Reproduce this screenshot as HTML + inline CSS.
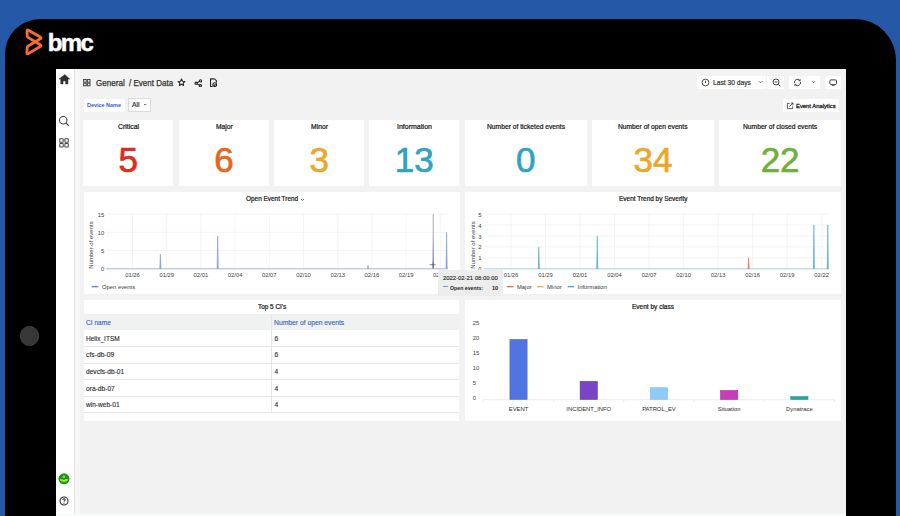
<!DOCTYPE html>
<html><head><meta charset="utf-8">
<style>
*{margin:0;padding:0;box-sizing:border-box}
html,body{width:900px;height:516px;overflow:hidden;background:#2558a6;font-family:"Liberation Sans",sans-serif}
.a{position:absolute;white-space:nowrap}
#frame{position:absolute;left:5.3px;top:19px;width:891.2px;height:560px;background:#000;border-radius:35px 41px 0 0}
#cam{position:absolute;left:19.6px;top:326.1px;width:19.6px;height:19.6px;border-radius:50%;background:#363636;border:0.6px solid #444}
#screen{position:absolute;left:55.5px;top:68.5px;width:790.5px;height:448px;background:#f1f2f1;overflow:hidden}
#side{position:absolute;left:55.5px;top:68.5px;width:19.2px;height:448px;background:#fff;border-right:1px solid #e4e4e4}
.p{position:absolute;background:#fff}
.st{font-size:6.3px;font-weight:bold;color:#222;text-align:center}
.sv{font-size:35px;text-align:center;line-height:1;-webkit-text-stroke:0.7px currentColor}
.ax{font-size:5.6px;color:#555}
.btn{position:absolute;background:#fff}
</style></head><body>
<div id="frame"></div>
<div id="cam"></div>
<svg class="a" style="left:0;top:0" width="100" height="70">
  <path d="M28.46 30.20 L40.24 37.00 Q41.80 37.90 40.25 38.82 L28.23 45.99 Q27.20 46.60 27.14 47.80 L26.89 52.70 Q26.80 54.50 28.35 53.58 L40.25 46.52 Q41.80 45.60 40.25 44.68 L28.33 37.61 Q27.30 37.00 27.24 35.80 L26.99 31.10 Q26.90 29.30 28.46 30.20Z" fill="none" stroke="#f96a36" stroke-width="2.8" stroke-linecap="round" stroke-linejoin="round"/>
</svg>
<div class="a" style="left:47.8px;top:30.5px;font-size:24px;line-height:24px;font-weight:bold;color:#fff;letter-spacing:-1.7px;-webkit-text-stroke:0.5px #fff">bmc</div>
<div id="screen"></div>
<div id="side"></div>
<div class="a" style="left:75.3px;top:68.5px;width:4.5px;height:446px;background:#f5f6f6"></div>
<div class="a" style="left:55.5px;top:513.8px;width:790.5px;height:3px;background:#f9fafa"></div>

<div class="p" style="left:83.30px;top:119.70px;width:90.00px;height:66.60px;"></div>
<div class="a" style="left:117.90px;top:123.10px;font-size:6.6px;line-height:7.92px;font-weight:normal;color:#1a1a1a;transform:scaleX(1.0465);transform-origin:0 0;-webkit-text-stroke:0.22px #1a1a1a">Critical</div>
<div class="a sv" style="left:83.3px;width:90.00000000000001px;top:142px;color:#e02a1c">5</div>
<div class="p" style="left:179.00px;top:119.70px;width:90.00px;height:66.60px;"></div>
<div class="a" style="left:215.50px;top:123.10px;font-size:6.6px;line-height:7.92px;font-weight:normal;color:#1a1a1a;transform:scaleX(1.0182);transform-origin:0 0;-webkit-text-stroke:0.22px #1a1a1a">Major</div>
<div class="a sv" style="left:179px;width:90px;top:142px;color:#e8651a">6</div>
<div class="p" style="left:274.30px;top:119.70px;width:90.00px;height:66.60px;"></div>
<div class="a" style="left:311.00px;top:123.10px;font-size:6.6px;line-height:7.92px;font-weight:normal;color:#1a1a1a;transform:scaleX(1.0242);transform-origin:0 0;-webkit-text-stroke:0.22px #1a1a1a">Minor</div>
<div class="a sv" style="left:274.3px;width:90.0px;top:142px;color:#eaa72a">3</div>
<div class="p" style="left:369.30px;top:119.70px;width:90.00px;height:66.60px;"></div>
<div class="a" style="left:397.00px;top:123.10px;font-size:6.6px;line-height:7.92px;font-weight:normal;color:#1a1a1a;transform:scaleX(1.0595);transform-origin:0 0;-webkit-text-stroke:0.22px #1a1a1a">Information</div>
<div class="a sv" style="left:369.3px;width:90.0px;top:142px;color:#2fa3bf">13</div>
<div class="p" style="left:465.00px;top:119.70px;width:121.70px;height:66.60px;"></div>
<div class="a" style="left:486.90px;top:123.10px;font-size:6.6px;line-height:7.92px;font-weight:normal;color:#1a1a1a;transform:scaleX(1.0188);transform-origin:0 0;-webkit-text-stroke:0.22px #1a1a1a">Number of ticketed events</div>
<div class="a sv" style="left:465px;width:121.70000000000005px;top:142px;color:#2fa3bf">0</div>
<div class="p" style="left:592.00px;top:119.70px;width:122.00px;height:66.60px;"></div>
<div class="a" style="left:618.20px;top:123.10px;font-size:6.6px;line-height:7.92px;font-weight:normal;color:#1a1a1a;transform:scaleX(1.0145);transform-origin:0 0;-webkit-text-stroke:0.22px #1a1a1a">Number of open events</div>
<div class="a sv" style="left:592px;width:122px;top:142px;color:#eaa72a">34</div>
<div class="p" style="left:719.00px;top:119.70px;width:122.20px;height:66.60px;"></div>
<div class="a" style="left:743.00px;top:123.10px;font-size:6.6px;line-height:7.92px;font-weight:normal;color:#1a1a1a;transform:scaleX(1.0165);transform-origin:0 0;-webkit-text-stroke:0.22px #1a1a1a">Number of closed events</div>
<div class="a sv" style="left:719px;width:122.20000000000005px;top:142px;color:#6fb03a">22</div>
<div class="p" style="left:83.80px;top:191.60px;width:376.20px;height:102.20px;"></div>
<div class="p" style="left:464.60px;top:191.60px;width:376.60px;height:102.20px;"></div>
<div class="p" style="left:83.80px;top:299.50px;width:375.60px;height:121.00px;"></div>
<div class="p" style="left:464.60px;top:299.50px;width:376.90px;height:121.00px;"></div>
<svg class="a" style="left:82px;top:78px" width="10" height="9" viewBox="0 0 10 9"><g fill="none" stroke="#444" stroke-width="1"><rect x="1.6" y="1.5" width="2.6" height="2.6"/><rect x="5.4" y="1.5" width="2.6" height="2.6"/><rect x="1.6" y="5.2" width="2.6" height="2.6"/><rect x="5.4" y="5.2" width="2.6" height="2.6"/></g></svg>
<div class="a" style="left:95.50px;top:77.54px;font-size:9.2px;line-height:11.04px;font-weight:normal;color:#2e2e2e;transform:scaleX(0.8793);transform-origin:0 0;-webkit-text-stroke:0.25px #2e2e2e">General</div>
<div class="a" style="left:128.50px;top:77.54px;font-size:9.2px;line-height:11.04px;font-weight:normal;color:#2e2e2e;transform:scaleX(0.8747);transform-origin:0 0;-webkit-text-stroke:0.25px #2e2e2e">/ Event Data</div>
<svg class="a" style="left:177.1px;top:78.3px" width="9" height="9" viewBox="0 0 24 24"><path d="M12 2.8l2.7 5.8 6.3.7-4.7 4.3 1.3 6.2-5.6-3.2-5.6 3.2 1.3-6.2-4.7-4.3 6.3-.7z" fill="none" stroke="#2a2a2a" stroke-width="3" stroke-linejoin="round"/></svg>
<svg class="a" style="left:193.6px;top:78.5px" width="8.6" height="8.6" viewBox="0 0 24 24"><g fill="none" stroke="#2a2a2a" stroke-width="3.2"><circle cx="18" cy="5.2" r="3.1"/><circle cx="5.8" cy="12" r="3.1"/><circle cx="18" cy="18.8" r="3.1"/><path d="M8.6 10.4l6.6-3.6M8.6 13.6l6.6 3.6"/></g></svg>
<svg class="a" style="left:208.5px;top:77.9px" width="8.8" height="9.6" viewBox="0 0 20 22"><g fill="none" stroke="#2a2a2a" stroke-width="2.6" stroke-linejoin="round"><path d="M12.5 2H3.5v17.5H8.5"/><path d="M12.5 2l4.5 4.5v4"/><circle cx="13" cy="15.2" r="4.3"/><path d="M11 15.2l1.6 1.6 2.4-2.4"/></g></svg>
<div class="btn" style="left:697.00px;top:75.80px;width:69.40px;height:13.00px;"></div>
<div class="btn" style="left:767.30px;top:75.80px;width:16.40px;height:13.00px;"></div>
<div class="btn" style="left:789.00px;top:75.80px;width:16.60px;height:13.00px;"></div>
<div class="btn" style="left:806.00px;top:75.80px;width:14.10px;height:13.00px;"></div>
<div class="btn" style="left:825.40px;top:75.80px;width:15.80px;height:13.00px;"></div>
<svg class="a" style="left:700.5px;top:77.9px" width="9" height="9" viewBox="0 0 9 9"><circle cx="4.5" cy="4.5" r="3.4" fill="none" stroke="#444" stroke-width="0.95"/><path d="M4.5 2.6V4.6" stroke="#444" stroke-width="0.9"/><circle cx="4.5" cy="4.6" r="0.7" fill="#444"/></svg>
<div class="a" style="left:712.90px;top:78.90px;font-size:6.6px;line-height:7.92px;font-weight:normal;color:#333;transform:scaleX(1.0128);transform-origin:0 0;-webkit-text-stroke:0.2px #333">Last 30 days</div>
<svg class="a" style="left:757.5px;top:80px" width="5" height="4" viewBox="0 0 10 8"><path d="M2 2.5l3 3 3-3" fill="none" stroke="#555" stroke-width="1.6"/></svg>
<svg class="a" style="left:771.5px;top:78.4px" width="9" height="9" viewBox="0 0 9 9"><g fill="none" stroke="#383838" stroke-width="0.95"><circle cx="4" cy="4" r="3"/><path d="M6.2 6.2l2.2 2.2M2.6 4h2.8"/></g></svg>
<svg class="a" style="left:792.5px;top:77.9px" width="9" height="9" viewBox="0 0 9 9"><g fill="none" stroke="#383838" stroke-width="0.95"><path d="M1.6 5A3 3 0 0 1 6.8 2.3"/><path d="M7.4 4A3 3 0 0 1 2.2 6.7"/></g><path d="M7.6 0.9L7.5 3.3L5.2 2.9Z" fill="#383838"/><path d="M1.4 8.1L1.5 5.7L3.8 6.1Z" fill="#383838"/></svg>
<svg class="a" style="left:810.6px;top:80.4px" width="5" height="4" viewBox="0 0 10 8"><path d="M2 2.5l3 3 3-3" fill="none" stroke="#555" stroke-width="1.7"/></svg>
<svg class="a" style="left:829px;top:78.6px" width="8.4" height="8" viewBox="0 0 8.4 8"><rect x="0.9" y="0.9" width="6.6" height="4.6" rx="1" fill="none" stroke="#383838" stroke-width="0.95"/><path d="M2.4 5.6h3.6l-0.6 1.5h-2.4z" fill="#666"/></svg>
<div class="btn" style="left:84.00px;top:98.60px;width:40.80px;height:13.20px;"></div>
<div class="a" style="left:87.20px;top:101.96px;font-size:5.8px;line-height:6.96px;font-weight:bold;color:#3a60c2;transform:scaleX(0.9417);transform-origin:0 0;">Device Name</div>
<div class="btn" style="left:127.60px;top:98.20px;width:23.60px;height:14.00px;;border:0.8px solid #dcdcdc"></div>
<div class="a" style="left:132.00px;top:101.42px;font-size:7px;line-height:8.4px;font-weight:normal;color:#333;transform:scaleX(0.9781);transform-origin:0 0;-webkit-text-stroke:0.2px #333">All</div>
<svg class="a" style="left:142.6px;top:103.3px" width="4.4" height="3.6" viewBox="0 0 10 8"><path d="M2 2l3 3 3-3" fill="none" stroke="#444" stroke-width="1.8"/></svg>
<div class="btn" style="left:783.00px;top:99.00px;width:55.80px;height:13.00px;"></div>
<svg class="a" style="left:785.8px;top:101.6px" width="8" height="8" viewBox="0 0 20 20"><g fill="none" stroke="#333" stroke-width="2"><path d="M9 3.5H3.5v13h13V11"/><path d="M11.5 2.5h6v6M17.5 2.5L9 11"/></g></svg>
<div class="a" style="left:795.80px;top:101.58px;font-size:6.2px;line-height:7.44px;font-weight:normal;color:#1e1e1e;transform:scaleX(0.9444);transform-origin:0 0;-webkit-text-stroke:0.3px #1e1e1e">Event Analytics</div>
<svg class="a" style="left:57.5px;top:72.5px" width="13" height="12" viewBox="0 0 24 22"><path d="M12.7 2.6L1.8 11.2h3.2v9h4.4v-5.6h4.6v5.6h4.4v-9h3.2z" fill="#303030" stroke="#303030" stroke-width="0.8" stroke-linejoin="round"/></svg>
<svg class="a" style="left:57.5px;top:114.5px" width="12" height="12" viewBox="0 0 24 24"><g fill="none" stroke="#444" stroke-width="2.2"><circle cx="10.5" cy="10.5" r="7.5"/><path d="M16 16l5.5 5.5"/></g></svg>
<svg class="a" style="left:59px;top:138.2px" width="10.4" height="10" viewBox="0 0 10.4 10"><g fill="none" stroke="#4a4a4a" stroke-width="1.05"><rect x="0.8" y="0.8" width="3.4" height="3.4" rx="0.4"/><rect x="5.9" y="0.8" width="3.4" height="3.4" rx="0.4"/><rect x="0.8" y="5.6" width="3.4" height="3.4" rx="0.4"/><rect x="5.9" y="5.6" width="3.4" height="3.4" rx="0.4"/></g></svg>
<svg class="a" style="left:57.9px;top:472.9px" width="12" height="12" viewBox="0 0 24 24"><circle cx="12" cy="11.6" r="11" fill="#1c961c"/><circle cx="11.6" cy="7.4" r="2.6" fill="#7fe04a"/><path d="M3.2 13.4Q6 10.8 9 12.6Q11.6 15 14.4 12.6Q17.4 10.8 20.4 13.4Q18.5 17.6 12 17.8Q5.5 17.6 3.2 13.4Z" fill="#a9ea34"/></svg>
<svg class="a" style="left:58.8px;top:495.9px" width="10" height="10" viewBox="0 0 20 20"><g fill="none" stroke="#2a2a2a" stroke-width="2.1"><circle cx="10" cy="10" r="8"/><path d="M7.8 7.8a2.2 2.2 0 1 1 3 2c-.6.3-.8.7-.8 1.4"/></g><circle cx="10" cy="14.3" r="1.2" fill="#2a2a2a"/></svg>
<div class="a" style="left:245.60px;top:195.30px;font-size:6.6px;line-height:7.92px;font-weight:normal;color:#1a1a1a;transform:scaleX(0.9746);transform-origin:0 0;-webkit-text-stroke:0.22px #1a1a1a">Open Event Trend</div>
<svg class="a" style="left:299.5px;top:197.5px" width="5" height="4" viewBox="0 0 10 8"><path d="M2 2l3 3 3-3" fill="none" stroke="#444" stroke-width="1.5"/></svg>
<svg class="a" style="left:83px;top:191px" width="378" height="104" viewBox="83 191 378 104"><line x1="106.2" x2="447.7" y1="268.80" y2="268.80" stroke="#ececec" stroke-width="0.6"/><text x="104.20" y="271.40" font-size="5.85" fill="#3c3c3c" text-anchor="end" font-weight="normal" font-family="Liberation Sans, sans-serif" >0</text><line x1="106.2" x2="447.7" y1="250.53" y2="250.53" stroke="#ececec" stroke-width="0.6"/><text x="104.20" y="253.13" font-size="5.85" fill="#3c3c3c" text-anchor="end" font-weight="normal" font-family="Liberation Sans, sans-serif" >5</text><line x1="106.2" x2="447.7" y1="232.27" y2="232.27" stroke="#ececec" stroke-width="0.6"/><text x="104.20" y="234.87" font-size="5.85" fill="#3c3c3c" text-anchor="end" font-weight="normal" font-family="Liberation Sans, sans-serif" >10</text><line x1="106.2" x2="447.7" y1="214.00" y2="214.00" stroke="#ececec" stroke-width="0.6"/><text x="104.20" y="216.60" font-size="5.85" fill="#3c3c3c" text-anchor="end" font-weight="normal" font-family="Liberation Sans, sans-serif" >15</text><line x1="132.50" x2="132.50" y1="214.0" y2="268.8" stroke="#ececec" stroke-width="0.6"/><text x="132.50" y="277.30" font-size="5.85" fill="#3c3c3c" text-anchor="middle" font-weight="normal" font-family="Liberation Sans, sans-serif" >01/26</text><line x1="166.70" x2="166.70" y1="214.0" y2="268.8" stroke="#ececec" stroke-width="0.6"/><text x="166.70" y="277.30" font-size="5.85" fill="#3c3c3c" text-anchor="middle" font-weight="normal" font-family="Liberation Sans, sans-serif" >01/29</text><line x1="200.90" x2="200.90" y1="214.0" y2="268.8" stroke="#ececec" stroke-width="0.6"/><text x="200.90" y="277.30" font-size="5.85" fill="#3c3c3c" text-anchor="middle" font-weight="normal" font-family="Liberation Sans, sans-serif" >02/01</text><line x1="235.10" x2="235.10" y1="214.0" y2="268.8" stroke="#ececec" stroke-width="0.6"/><text x="235.10" y="277.30" font-size="5.85" fill="#3c3c3c" text-anchor="middle" font-weight="normal" font-family="Liberation Sans, sans-serif" >02/04</text><line x1="269.30" x2="269.30" y1="214.0" y2="268.8" stroke="#ececec" stroke-width="0.6"/><text x="269.30" y="277.30" font-size="5.85" fill="#3c3c3c" text-anchor="middle" font-weight="normal" font-family="Liberation Sans, sans-serif" >02/07</text><line x1="303.50" x2="303.50" y1="214.0" y2="268.8" stroke="#ececec" stroke-width="0.6"/><text x="303.50" y="277.30" font-size="5.85" fill="#3c3c3c" text-anchor="middle" font-weight="normal" font-family="Liberation Sans, sans-serif" >02/10</text><line x1="337.70" x2="337.70" y1="214.0" y2="268.8" stroke="#ececec" stroke-width="0.6"/><text x="337.70" y="277.30" font-size="5.85" fill="#3c3c3c" text-anchor="middle" font-weight="normal" font-family="Liberation Sans, sans-serif" >02/13</text><line x1="371.90" x2="371.90" y1="214.0" y2="268.8" stroke="#ececec" stroke-width="0.6"/><text x="371.90" y="277.30" font-size="5.85" fill="#3c3c3c" text-anchor="middle" font-weight="normal" font-family="Liberation Sans, sans-serif" >02/16</text><line x1="406.10" x2="406.10" y1="214.0" y2="268.8" stroke="#ececec" stroke-width="0.6"/><text x="406.10" y="277.30" font-size="5.85" fill="#3c3c3c" text-anchor="middle" font-weight="normal" font-family="Liberation Sans, sans-serif" >02/19</text><line x1="440.30" x2="440.30" y1="214.0" y2="268.8" stroke="#ececec" stroke-width="0.6"/><text x="440.30" y="277.30" font-size="5.85" fill="#3c3c3c" text-anchor="middle" font-weight="normal" font-family="Liberation Sans, sans-serif" >02/22</text><line x1="106.2" x2="447.7" y1="268.8" y2="268.8" stroke="#a9b8e4" stroke-width="1"/><path d="M159.80 268.8 L160.40 254.19 L161.00 268.8" fill="#8ea6d8" stroke="#7f9ad6" stroke-width="0.6"/><path d="M217.10 268.8 L217.70 235.92 L218.30 268.8" fill="#8ea6d8" stroke="#7f9ad6" stroke-width="0.6"/><path d="M367.40 268.8 L368.00 265.15 L368.60 268.8" fill="#8ea6d8" stroke="#7f9ad6" stroke-width="0.6"/><path d="M446.00 268.8 L446.60 232.27 L447.20 268.8" fill="#8ea6d8" stroke="#7f9ad6" stroke-width="0.6"/><line x1="433.2" x2="433.2" y1="214.0" y2="268.8" stroke="#b8a4b4" stroke-width="1"/><path d="M432.4 268.8 L433.2 232.5 L434 268.8" fill="#8e94c8"/><path d="M429.6 264.7h6M433.2 261.8v5.8" stroke="#555" stroke-width="0.7"/><text x="91.20" y="245.00" font-size="6" fill="#3c3c3c" text-anchor="middle" font-weight="normal" font-family="Liberation Sans, sans-serif" transform="rotate(-90 91.2 245)" dy="2">Number of events</text><line x1="91.7" x2="98.4" y1="286.7" y2="286.7" stroke="#5577cc" stroke-width="1.2"/><text x="102.00" y="288.70" font-size="5.85" fill="#383838" text-anchor="start" font-weight="normal" font-family="Liberation Sans, sans-serif" >Open events</text></svg>
<div class="a" style="left:618.90px;top:195.30px;font-size:6.6px;line-height:7.92px;font-weight:normal;color:#1a1a1a;transform:scaleX(0.9792);transform-origin:0 0;-webkit-text-stroke:0.22px #1a1a1a">Event Trend by Severity</div>
<svg class="a" style="left:464px;top:191px" width="378" height="104" viewBox="464 191 378 104"><line x1="483.5" x2="829" y1="268.80" y2="268.80" stroke="#ececec" stroke-width="0.6"/><text x="481.50" y="271.40" font-size="5.85" fill="#3c3c3c" text-anchor="end" font-weight="normal" font-family="Liberation Sans, sans-serif" >0</text><line x1="483.5" x2="829" y1="257.84" y2="257.84" stroke="#ececec" stroke-width="0.6"/><text x="481.50" y="260.44" font-size="5.85" fill="#3c3c3c" text-anchor="end" font-weight="normal" font-family="Liberation Sans, sans-serif" >1</text><line x1="483.5" x2="829" y1="246.88" y2="246.88" stroke="#ececec" stroke-width="0.6"/><text x="481.50" y="249.48" font-size="5.85" fill="#3c3c3c" text-anchor="end" font-weight="normal" font-family="Liberation Sans, sans-serif" >2</text><line x1="483.5" x2="829" y1="235.92" y2="235.92" stroke="#ececec" stroke-width="0.6"/><text x="481.50" y="238.52" font-size="5.85" fill="#3c3c3c" text-anchor="end" font-weight="normal" font-family="Liberation Sans, sans-serif" >3</text><line x1="483.5" x2="829" y1="224.96" y2="224.96" stroke="#ececec" stroke-width="0.6"/><text x="481.50" y="227.56" font-size="5.85" fill="#3c3c3c" text-anchor="end" font-weight="normal" font-family="Liberation Sans, sans-serif" >4</text><line x1="483.5" x2="829" y1="214.00" y2="214.00" stroke="#ececec" stroke-width="0.6"/><text x="481.50" y="216.60" font-size="5.85" fill="#3c3c3c" text-anchor="end" font-weight="normal" font-family="Liberation Sans, sans-serif" >5</text><line x1="511.00" x2="511.00" y1="214.0" y2="268.8" stroke="#ececec" stroke-width="0.6"/><text x="511.00" y="277.30" font-size="5.85" fill="#3c3c3c" text-anchor="middle" font-weight="normal" font-family="Liberation Sans, sans-serif" >01/26</text><line x1="545.52" x2="545.52" y1="214.0" y2="268.8" stroke="#ececec" stroke-width="0.6"/><text x="545.52" y="277.30" font-size="5.85" fill="#3c3c3c" text-anchor="middle" font-weight="normal" font-family="Liberation Sans, sans-serif" >01/29</text><line x1="580.04" x2="580.04" y1="214.0" y2="268.8" stroke="#ececec" stroke-width="0.6"/><text x="580.04" y="277.30" font-size="5.85" fill="#3c3c3c" text-anchor="middle" font-weight="normal" font-family="Liberation Sans, sans-serif" >02/01</text><line x1="614.56" x2="614.56" y1="214.0" y2="268.8" stroke="#ececec" stroke-width="0.6"/><text x="614.56" y="277.30" font-size="5.85" fill="#3c3c3c" text-anchor="middle" font-weight="normal" font-family="Liberation Sans, sans-serif" >02/04</text><line x1="649.08" x2="649.08" y1="214.0" y2="268.8" stroke="#ececec" stroke-width="0.6"/><text x="649.08" y="277.30" font-size="5.85" fill="#3c3c3c" text-anchor="middle" font-weight="normal" font-family="Liberation Sans, sans-serif" >02/07</text><line x1="683.60" x2="683.60" y1="214.0" y2="268.8" stroke="#ececec" stroke-width="0.6"/><text x="683.60" y="277.30" font-size="5.85" fill="#3c3c3c" text-anchor="middle" font-weight="normal" font-family="Liberation Sans, sans-serif" >02/10</text><line x1="718.12" x2="718.12" y1="214.0" y2="268.8" stroke="#ececec" stroke-width="0.6"/><text x="718.12" y="277.30" font-size="5.85" fill="#3c3c3c" text-anchor="middle" font-weight="normal" font-family="Liberation Sans, sans-serif" >02/13</text><line x1="752.64" x2="752.64" y1="214.0" y2="268.8" stroke="#ececec" stroke-width="0.6"/><text x="752.64" y="277.30" font-size="5.85" fill="#3c3c3c" text-anchor="middle" font-weight="normal" font-family="Liberation Sans, sans-serif" >02/16</text><line x1="787.16" x2="787.16" y1="214.0" y2="268.8" stroke="#ececec" stroke-width="0.6"/><text x="787.16" y="277.30" font-size="5.85" fill="#3c3c3c" text-anchor="middle" font-weight="normal" font-family="Liberation Sans, sans-serif" >02/19</text><line x1="821.68" x2="821.68" y1="214.0" y2="268.8" stroke="#ececec" stroke-width="0.6"/><text x="821.68" y="277.30" font-size="5.85" fill="#3c3c3c" text-anchor="middle" font-weight="normal" font-family="Liberation Sans, sans-serif" >02/22</text><line x1="483.5" x2="829" y1="268.8" y2="268.8" stroke="#a6d4dc" stroke-width="1"/><path d="M538.20 268.8 L538.80 246.88 L539.40 268.8" fill="#5cb0c0" stroke="#5cb0c0" stroke-width="0.6"/><path d="M596.70 268.8 L597.30 235.92 L597.90 268.8" fill="#5cb0c0" stroke="#5cb0c0" stroke-width="0.6"/><path d="M748.00 268.8 L748.60 257.84 L749.20 268.8" fill="#e4705a" stroke="#e4705a" stroke-width="0.6"/><path d="M813.30 268.8 L813.90 224.96 L814.50 268.8" fill="#5cb0c0" stroke="#5cb0c0" stroke-width="0.6"/><path d="M827.20 268.8 L827.80 224.96 L828.40 268.8" fill="#5cb0c0" stroke="#5cb0c0" stroke-width="0.6"/><text x="472.60" y="245.00" font-size="6" fill="#3c3c3c" text-anchor="middle" font-weight="normal" font-family="Liberation Sans, sans-serif" transform="rotate(-90 472.6 245)" dy="2">Number of events</text><line x1="507" x2="513.5" y1="286.7" y2="286.7" stroke="#e0651a" stroke-width="1.2"/><text x="517.00" y="288.70" font-size="5.85" fill="#383838" text-anchor="start" font-weight="normal" font-family="Liberation Sans, sans-serif" >Major</text><line x1="537" x2="543.5" y1="286.7" y2="286.7" stroke="#eaa72a" stroke-width="1.2"/><text x="547.00" y="288.70" font-size="5.85" fill="#383838" text-anchor="start" font-weight="normal" font-family="Liberation Sans, sans-serif" >Minor</text><line x1="567.6" x2="574.1" y1="286.7" y2="286.7" stroke="#2aa3c3" stroke-width="1.2"/><text x="577.60" y="288.70" font-size="5.85" fill="#383838" text-anchor="start" font-weight="normal" font-family="Liberation Sans, sans-serif" >Information</text></svg>
<div class="a" style="left:438.10px;top:270.40px;width:65.20px;height:25.20px;;background:rgba(236,236,236,0.96)"></div>
<div class="a" style="left:443.40px;top:274.48px;font-size:6.2px;line-height:7.44px;font-weight:normal;color:#222;transform:scaleX(0.9519);transform-origin:0 0;-webkit-text-stroke:0.12px #222">2022-02-21 08:00:00</div>
<div class="a" style="left:443px;top:286.4px;width:4.7px;height:1.1px;background:#7f93cf"></div>
<div class="a" style="left:449.60px;top:283.68px;font-size:6.2px;line-height:7.44px;font-weight:bold;color:#222;transform:scaleX(0.8427);transform-origin:0 0;">Open events:</div>
<div class="a" style="left:492.00px;top:283.68px;font-size:6.2px;line-height:7.44px;font-weight:bold;color:#222;transform:scaleX(0.9009);transform-origin:0 0;">10</div>
<div class="a" style="left:257.70px;top:302.90px;font-size:6.6px;line-height:7.92px;font-weight:normal;color:#1a1a1a;transform:scaleX(0.9712);transform-origin:0 0;-webkit-text-stroke:0.22px #1a1a1a">Top 5 CI&#39;s</div>
<div class="a" style="left:83.80px;top:314.20px;width:375.60px;height:15.60px;;background:#f0f1f1"></div>
<div class="a" style="left:86.10px;top:318.90px;font-size:6.6px;line-height:7.92px;font-weight:normal;color:#3462c6;transform:scaleX(0.9981);transform-origin:0 0;-webkit-text-stroke:0.12px #3462c6">CI name</div>
<div class="a" style="left:274.40px;top:318.90px;font-size:6.6px;line-height:7.92px;font-weight:normal;color:#3462c6;transform:scaleX(1.0247);transform-origin:0 0;-webkit-text-stroke:0.12px #3462c6">Number of open events</div>
<div class="a" style="left:271.00px;top:314.20px;width:0.60px;height:98.00px;;background:#e6e6e6"></div>
<div class="a" style="left:86.20px;top:334.50px;font-size:6.6px;line-height:7.92px;font-weight:normal;color:#2a2a2a;transform:scaleX(0.9876);transform-origin:0 0;-webkit-text-stroke:0.12px #2a2a2a">Helix_ITSM</div>
<div class="a" style="left:274.60px;top:334.50px;font-size:6.6px;line-height:7.92px;font-weight:normal;color:#2a2a2a;transform:scaleX(1.0000);transform-origin:0 0;-webkit-text-stroke:0.12px #2a2a2a">6</div>
<div class="a" style="left:83.80px;top:346.00px;width:375.60px;height:0.70px;;background:#e6e6e6"></div>
<div class="a" style="left:86.20px;top:351.20px;font-size:6.6px;line-height:7.92px;font-weight:normal;color:#2a2a2a;transform:scaleX(1.0246);transform-origin:0 0;-webkit-text-stroke:0.12px #2a2a2a">cfs-db-09</div>
<div class="a" style="left:274.60px;top:351.20px;font-size:6.6px;line-height:7.92px;font-weight:normal;color:#2a2a2a;transform:scaleX(1.0000);transform-origin:0 0;-webkit-text-stroke:0.12px #2a2a2a">6</div>
<div class="a" style="left:83.80px;top:362.50px;width:375.60px;height:0.70px;;background:#e6e6e6"></div>
<div class="a" style="left:86.20px;top:367.90px;font-size:6.6px;line-height:7.92px;font-weight:normal;color:#2a2a2a;transform:scaleX(1.0014);transform-origin:0 0;-webkit-text-stroke:0.12px #2a2a2a">devcfs-db-01</div>
<div class="a" style="left:274.60px;top:367.90px;font-size:6.6px;line-height:7.92px;font-weight:normal;color:#2a2a2a;transform:scaleX(1.0000);transform-origin:0 0;-webkit-text-stroke:0.12px #2a2a2a">4</div>
<div class="a" style="left:83.80px;top:379.20px;width:375.60px;height:0.70px;;background:#e6e6e6"></div>
<div class="a" style="left:86.20px;top:384.60px;font-size:6.6px;line-height:7.92px;font-weight:normal;color:#2a2a2a;transform:scaleX(1.0066);transform-origin:0 0;-webkit-text-stroke:0.12px #2a2a2a">ora-db-07</div>
<div class="a" style="left:274.60px;top:384.60px;font-size:6.6px;line-height:7.92px;font-weight:normal;color:#2a2a2a;transform:scaleX(1.0000);transform-origin:0 0;-webkit-text-stroke:0.12px #2a2a2a">4</div>
<div class="a" style="left:83.80px;top:395.80px;width:375.60px;height:0.70px;;background:#e6e6e6"></div>
<div class="a" style="left:86.23px;top:401.30px;font-size:6.6px;line-height:7.92px;font-weight:normal;color:#2a2a2a;transform:scaleX(0.9943);transform-origin:0 0;-webkit-text-stroke:0.12px #2a2a2a">win-web-01</div>
<div class="a" style="left:274.60px;top:401.30px;font-size:6.6px;line-height:7.92px;font-weight:normal;color:#2a2a2a;transform:scaleX(1.0000);transform-origin:0 0;-webkit-text-stroke:0.12px #2a2a2a">4</div>
<div class="a" style="left:83.80px;top:412.00px;width:375.60px;height:0.70px;;background:#e6e6e6"></div>
<div class="a" style="left:632.00px;top:302.90px;font-size:6.6px;line-height:7.92px;font-weight:normal;color:#1a1a1a;transform:scaleX(0.9874);transform-origin:0 0;-webkit-text-stroke:0.22px #1a1a1a">Event by class</div>
<svg class="a" style="left:464px;top:299px" width="378" height="122" viewBox="464 299 378 122"><text x="472.80" y="400.30" font-size="5.85" fill="#3c3c3c" text-anchor="start" font-weight="normal" font-family="Liberation Sans, sans-serif" >0</text><text x="472.80" y="385.20" font-size="5.85" fill="#3c3c3c" text-anchor="start" font-weight="normal" font-family="Liberation Sans, sans-serif" >5</text><text x="472.80" y="370.10" font-size="5.85" fill="#3c3c3c" text-anchor="start" font-weight="normal" font-family="Liberation Sans, sans-serif" >10</text><text x="472.80" y="355.00" font-size="5.85" fill="#3c3c3c" text-anchor="start" font-weight="normal" font-family="Liberation Sans, sans-serif" >15</text><text x="472.80" y="339.90" font-size="5.85" fill="#3c3c3c" text-anchor="start" font-weight="normal" font-family="Liberation Sans, sans-serif" >20</text><text x="472.80" y="324.80" font-size="5.85" fill="#3c3c3c" text-anchor="start" font-weight="normal" font-family="Liberation Sans, sans-serif" >25</text><line x1="483.4" x2="834.5" y1="399.7" y2="399.7" stroke="#e4e4e4" stroke-width="0.7"/><line x1="483.40" x2="483.40" y1="399.7" y2="402" stroke="#e4e4e4" stroke-width="0.7"/><line x1="553.62" x2="553.62" y1="399.7" y2="402" stroke="#e4e4e4" stroke-width="0.7"/><line x1="623.84" x2="623.84" y1="399.7" y2="402" stroke="#e4e4e4" stroke-width="0.7"/><line x1="694.06" x2="694.06" y1="399.7" y2="402" stroke="#e4e4e4" stroke-width="0.7"/><line x1="764.28" x2="764.28" y1="399.7" y2="402" stroke="#e4e4e4" stroke-width="0.7"/><line x1="834.50" x2="834.50" y1="399.7" y2="402" stroke="#e4e4e4" stroke-width="0.7"/><rect x="509.91" y="339.50" width="17.2" height="59.90" fill="#5074e0" stroke="#4565cc" stroke-width="0.6"/><text x="518.51" y="411.20" font-size="5.85" fill="#2a2a2a" text-anchor="middle" font-weight="normal" font-family="Liberation Sans, sans-serif" >EVENT</text><rect x="580.13" y="381.40" width="17.2" height="18.00" fill="#7a45c5" stroke="#6436aa" stroke-width="0.6"/><text x="588.73" y="411.20" font-size="5.85" fill="#2a2a2a" text-anchor="middle" font-weight="normal" font-family="Liberation Sans, sans-serif" >INCIDENT_INFO</text><rect x="650.35" y="387.70" width="17.2" height="11.70" fill="#8ecbf7" stroke="#82bdee" stroke-width="0.6"/><text x="658.95" y="411.20" font-size="5.85" fill="#2a2a2a" text-anchor="middle" font-weight="normal" font-family="Liberation Sans, sans-serif" >PATROL_EV</text><rect x="720.57" y="390.50" width="17.2" height="8.90" fill="#c93cbc" stroke="#a52d9a" stroke-width="0.6"/><text x="729.17" y="411.20" font-size="5.85" fill="#2a2a2a" text-anchor="middle" font-weight="normal" font-family="Liberation Sans, sans-serif" >Situation</text><rect x="790.79" y="396.60" width="17.2" height="2.80" fill="#22a8a8" stroke="#1a9494" stroke-width="0.6"/><text x="799.39" y="411.20" font-size="5.85" fill="#2a2a2a" text-anchor="middle" font-weight="normal" font-family="Liberation Sans, sans-serif" >Dynatrace</text></svg>
</body></html>
